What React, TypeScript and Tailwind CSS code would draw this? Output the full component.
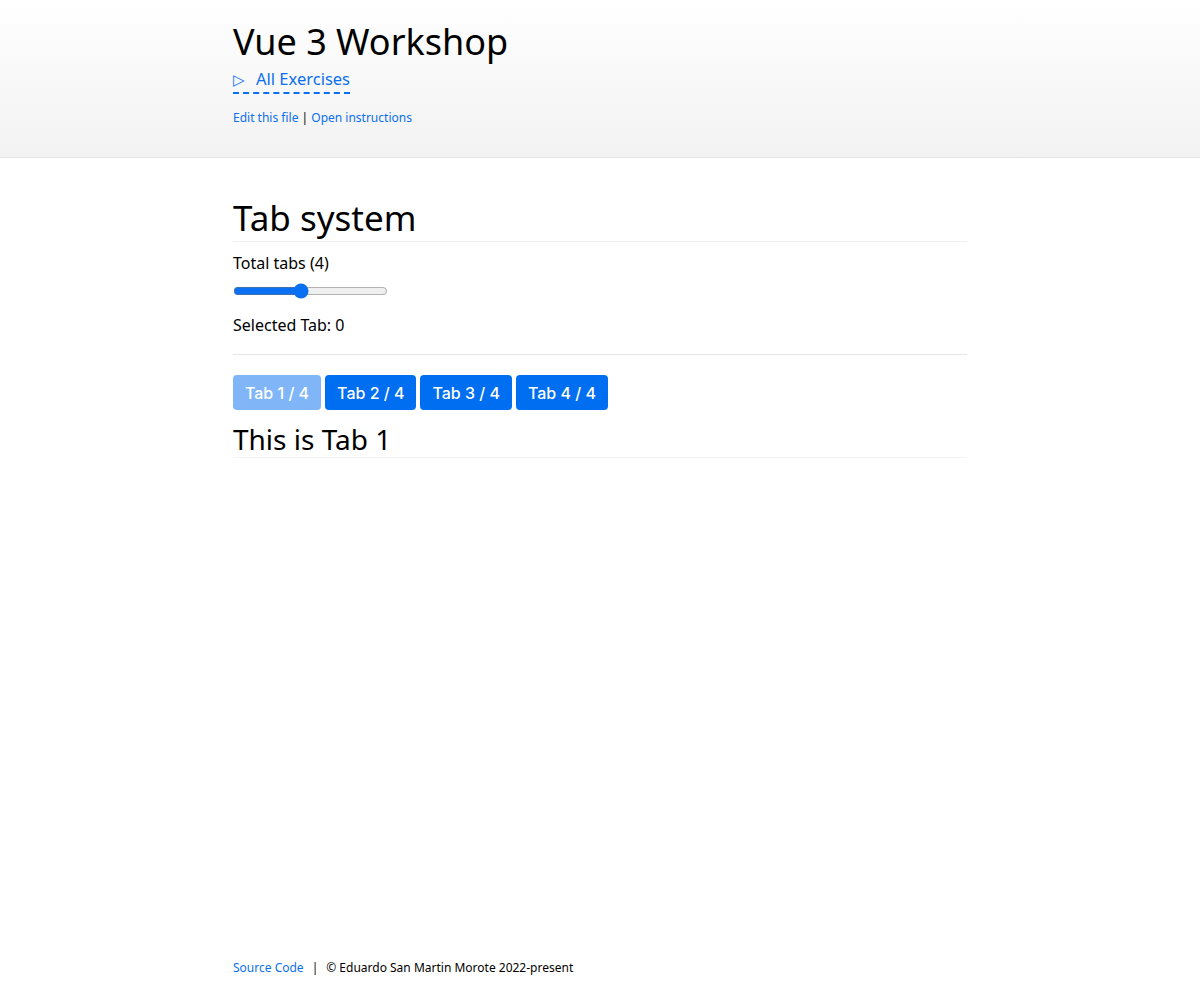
import React, { useState } from 'react';

const FONT = "font-['Noto_Sans','Open_Sans',sans-serif]";

export default function App() {
  const [total, setTotal] = useState(4);
  const [selected, setSelected] = useState(0);

  const tabs = Array.from({ length: total }, (_, i) => i);

  return (
    <div className={`min-h-screen flex flex-col bg-white text-black ${FONT}`}>
      {/* Header */}
      <header className="bg-gradient-to-b from-white to-[#f2f2f2] border-b border-[#e2e2e2]">
        <div className="max-w-[734px] mx-auto pt-[18px] pb-[31px]">
          <h1 className="text-[36px] leading-[48px] font-normal">Vue 3 Workshop</h1>
          <div className="mt-[1px]">
            <a className="inline-flex items-center gap-[11px] text-[16.5px] leading-[22px] text-[#0a6ff0] border-b-2 border-dashed border-[#0a6ff0] pb-[2px]">
              <span className="text-[15px]">▷</span>
              All Exercises
            </a>
          </div>
          <div className="mt-[16px] text-[12px] leading-[16px]">
            <a className="text-[#0a6ff0]">Edit this file</a>
            <span> | </span>
            <a className="text-[#0a6ff0]">Open instructions</a>
          </div>
        </div>
      </header>

      {/* Main */}
      <main className="flex-1 w-full max-w-[734px] mx-auto pt-[37px]">
        <h2 className="text-[35px] leading-[46px] font-normal border-b border-[#f0f0f0]">Tab system</h2>
        <p className="mt-[9px] text-[16px] leading-[24px]">Total tabs ({total})</p>
        <input
          type="range"
          min={1}
          max={8}
          value={total}
          onChange={(e) => setTotal(Number(e.target.value))}
          className="mt-[8px] block w-[155px] accent-[#0a6ff0]"
        />
        <p className="mt-[14px] text-[16px] leading-[24px]">Selected Tab: {selected}</p>
        <hr className="mt-[17px] border-t border-[#e5e5e5]" />

        <div className="mt-[20px] flex gap-[4px]">
          {tabs.map((i) => (
            <button
              key={i}
              onClick={() => setSelected(i)}
              className={`h-[35px] px-[12px] rounded-[4px] text-white text-[16px] font-medium font-['Inter',sans-serif] ${
                selected === i ? 'bg-[#80b6f7]' : 'bg-[#006ef0]'
              }`}
            >
              Tab {i + 1} / {total}
            </button>
          ))}
        </div>
        <h3 className="mt-[12px] text-[28px] leading-[35px] font-normal border-b border-[#f2f2f2]">
          This is Tab {selected + 1}
        </h3>
      </main>

      {/* Footer */}
      <footer className="max-w-[734px] w-full mx-auto pb-[24px] text-[12px] leading-[16px]">
        <a className="text-[#0a6ff0]">Source Code</a>
        <span className="mx-[8px]">|</span>
        <span>© Eduardo San Martin Morote 2022-present</span>
      </footer>
    </div>
  );
}
